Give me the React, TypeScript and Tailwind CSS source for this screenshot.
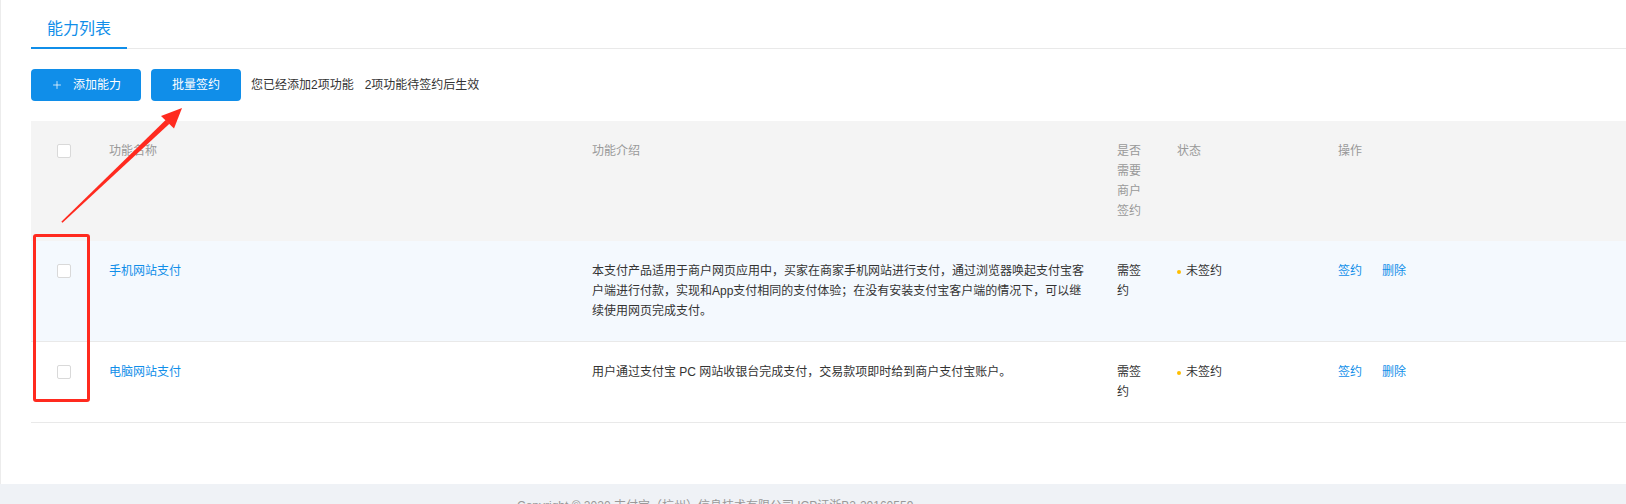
import React from 'react';
import { Plus } from 'lucide-react';

interface Ability {
  name: string;
  intro: string;
  sign: string;
  status: string;
}

const abilities: Ability[] = [
  {
    name: '手机网站支付',
    intro:
      '本支付产品适用于商户网页应用中，买家在商家手机网站进行支付，通过浏览器唤起支付宝客户端进行付款，实现和App支付相同的支付体验；在没有安装支付宝客户端的情况下，可以继续使用网页完成支付。',
    sign: '需签约',
    status: '未签约',
  },
  {
    name: '电脑网站支付',
    intro: '用户通过支付宝 PC 网站收银台完成支付，交易款项即时给到商户支付宝账户。',
    sign: '需签约',
    status: '未签约',
  },
];

const Checkbox: React.FC = () => (
  <div className="flex h-5 items-center">
    <span className="block h-[14px] w-[14px] rounded-[2px] border border-[#d9d9d9] bg-white" />
  </div>
);

const App: React.FC = () => {
  return (
    <div className="relative w-full bg-white font-['Liberation_Sans','Noto_Sans_CJK_SC',sans-serif] text-xs text-[#333]">
      <div className="border-l border-[#ececec] pb-[61px] pl-[30px]">
        {/* tabs */}
        <div className="flex border-b border-[#e9e9e9]">
          <div className="-mb-px border-b-2 border-[#108ee9] px-4 pt-[18px] pb-[7px] text-[16px] leading-[22px] text-[#108ee9]">
            能力列表
          </div>
        </div>

        {/* toolbar */}
        <div className="mt-5 flex items-center">
          <button
            type="button"
            className="flex h-8 w-[110px] items-center justify-center gap-[10px] rounded-[4px] bg-[#108ee9] text-xs text-white"
          >
            <Plus size={12} strokeWidth={1.5} />
            添加能力
          </button>
          <button
            type="button"
            className="ml-[10px] flex h-8 w-[90px] items-center justify-center rounded-[4px] bg-[#108ee9] text-xs text-white"
          >
            批量签约
          </button>
          <span className="ml-[10px]">您已经添加2项功能</span>
          <span className="ml-[11px]">2项功能待签约后生效</span>
        </div>

        {/* table */}
        <table className="mt-5 w-full table-fixed border-collapse text-left leading-5">
          <colgroup>
            <col className="w-[62px]" />
            <col className="w-[483px]" />
            <col className="w-[525px]" />
            <col className="w-[60px]" />
            <col className="w-[161px]" />
            <col />
          </colgroup>
          <thead>
            <tr className="bg-[#f4f4f4] text-[#999]">
              <th className="py-5 pl-[26px] align-top font-normal">
                <Checkbox />
              </th>
              <th className="px-4 py-5 align-top font-normal">功能名称</th>
              <th className="px-4 py-5 align-top font-normal">功能介绍</th>
              <th className="px-4 py-5 align-top font-normal">是否需要商户签约</th>
              <th className="px-4 py-5 align-top font-normal">状态</th>
              <th className="px-4 py-5 align-top font-normal">操作</th>
            </tr>
          </thead>
          <tbody>
            {abilities.map((a, i) => (
              <tr key={a.name} className={`border-b border-[#e9e9e9] ${i === 0 ? 'bg-[#f4f9fe]' : 'bg-white'}`}>
                <td className="py-5 pl-[26px] align-top">
                  <Checkbox />
                </td>
                <td className="px-4 py-5 align-top text-[#108ee9]">{a.name}</td>
                <td className="px-4 py-5 align-top">{a.intro}</td>
                <td className="px-4 py-5 align-top">{a.sign}</td>
                <td className="px-4 py-5 align-top">
                  <span className="mr-[5px] inline-block h-1 w-1 rounded-full bg-[#ffbf00] align-middle" />
                  {a.status}
                </td>
                <td className="px-4 py-5 align-top text-[#108ee9]">
                  <span>签约</span>
                  <span className="ml-5">删除</span>
                </td>
              </tr>
            ))}
          </tbody>
        </table>
      </div>

      {/* footer */}
      <div className="bg-[#eff2f6] pt-3 pb-4 pl-[517px] leading-5 text-[#999]">
        Copyright © 2020 支付宝（杭州）信息技术有限公司 ICP证浙B2-20160559
      </div>

      {/* annotation overlay */}
      <div className="pointer-events-none absolute top-[234px] left-[33px] h-[168px] w-[57px] rounded-[3px] border-[3px] border-[#ff2a1f]" />
      <svg
        className="pointer-events-none absolute top-0 left-0"
        width="240"
        height="260"
        viewBox="0 0 240 260"
      >
        <polygon points="61.3,221.7 165.6,119.9 169.4,123.7 62.5,222.7" fill="#ff2a1f" />
        <polygon points="182,108 161,116 174,128.5" fill="#ff2a1f" />
      </svg>
    </div>
  );
};

export default App;
